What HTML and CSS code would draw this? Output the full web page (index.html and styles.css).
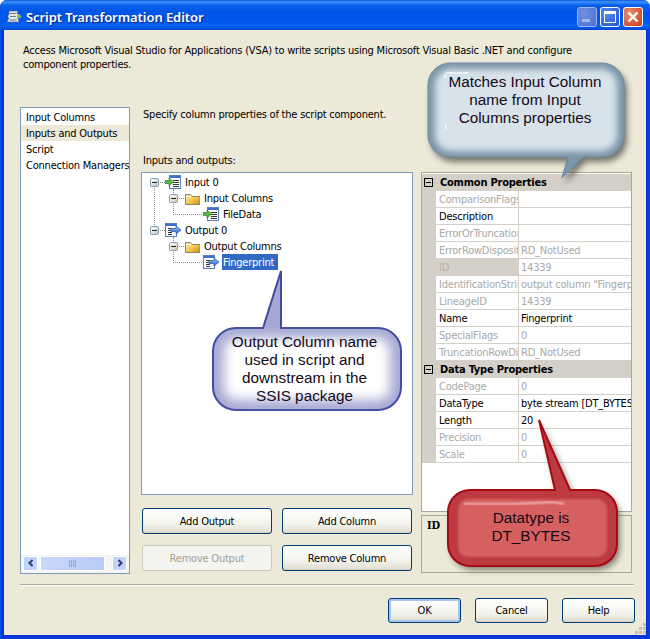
FILE: index.html
```html
<!DOCTYPE html>
<html lang="en">
<head>
<meta charset="utf-8">
<title>Script Transformation Editor</title>
<link rel="stylesheet" href="styles.css">
</head>
<body>
<svg class="defs" width="0" height="0" aria-hidden="true">
  <defs>
    <linearGradient id="folderFill" x1="0" y1="0" x2="1" y2="1"><stop offset="0" stop-color="#fff0b0"/><stop offset=".5" stop-color="#f8c850"/><stop offset="1" stop-color="#c88a18"/></linearGradient>
    <linearGradient id="expFill" x1="0" y1="0" x2="1" y2="1"><stop offset="0" stop-color="#fff"/><stop offset="1" stop-color="#c8c4b0"/></linearGradient>
    <linearGradient id="arrowBlue" x1="0" y1="0" x2="0" y2="1"><stop offset="0" stop-color="#9cc4f4"/><stop offset="1" stop-color="#2a66c8"/></linearGradient>
    <filter id="blur3" x="-20%" y="-20%" width="140%" height="140%"><feGaussianBlur stdDeviation="3"/></filter>
    <filter id="blur6" x="-20%" y="-20%" width="140%" height="140%"><feGaussianBlur stdDeviation="6"/></filter>
    <filter id="blur1" x="-20%" y="-40%" width="140%" height="180%"><feGaussianBlur stdDeviation="1"/></filter>
    <symbol id="expander" viewBox="0 0 9 9"><rect x=".5" y=".5" width="8" height="8" rx="1" fill="url(#expFill)" stroke="#7f9db9"/><path d="M2 4.500h5" stroke="#222" fill="none"/></symbol>
    <symbol id="doc" viewBox="0 0 16 14"><rect x="4.500" y=".5" width="11" height="13" fill="#fff" stroke="#5a7fc0"/><rect x="5" y="1" width="10" height="2" fill="#3c6fd0"/><path d="M8 5.500h6M8 7.500h6M8 9.500h6M8 11.500h6" stroke="#333" fill="none"/></symbol>
    <symbol id="inIcon" viewBox="0 0 16 14"><use href="#doc" width="16" height="14"/><path d="M0 5.500h4V3l4.500 4L4 11V8.500H0z" fill="#58b848" stroke="#2d7a28" stroke-width=".7"/></symbol>
    <symbol id="outIcon" viewBox="0 0 16 14"><rect x=".5" y=".5" width="11" height="13" fill="#fff" stroke="#5a7fc0"/><rect x="1" y="1" width="10" height="2" fill="#3c6fd0"/><path d="M3 5.500h4M3 7.500h4M3 9.500h4M3 11.500h4" stroke="#333" fill="none"/><path d="M6 5.500h5V3l5 4-5 4V8.500H6z" fill="url(#arrowBlue)" stroke="#1c4fa8" stroke-width=".7"/></symbol>
    <symbol id="folder" viewBox="0 0 15 12"><path d="M.5 11.500V1.500h5l1.500 2h8v8z" fill="url(#folderFill)" stroke="#8f8860"/><path d="M1 3.500h5" stroke="#fff" fill="none"/></symbol>
  </defs>
</svg>

<div class="window">
  <header class="titlebar">
    <svg class="app-icon" viewBox="0 0 16 16" width="16" height="16" aria-hidden="true">
      <path d="M3 2h9l-1 3h2v4h-1l1 4H1l2-4H2V6h1z" fill="#e4e6ea" stroke="#5b6a80" stroke-width=".6"/>
      <path d="M4 4.500h6M4 7.500h6M3.500 11h7" stroke="#6f7b8c" fill="none"/>
      <path d="M11 6.500h2V5l3 2.500L13 10V8.500h-2z" fill="#62c24e"/>
    </svg>
    <span class="title">Script Transformation Editor</span>
    <div class="caption-buttons">
      <span class="cap cap-min"><i class="min-bar"></i></span>
      <span class="cap cap-max"><i class="max-box"></i></span>
      <span class="cap cap-close">
        <svg viewBox="0 0 12 12" width="12" height="12" aria-hidden="true"><path d="M1.500 1.500l9 9M10.500 1.500l-9 9" stroke="#fff" stroke-width="2.400" fill="none"/></svg>
      </span>
    </div>
  </header>

  <div class="client">
    <p class="description">Access Microsoft Visual Studio for Applications (VSA) to write scripts using Microsoft Visual Basic .NET and configure<br>component properties.</p>

    <div class="main">
      <nav class="nav-list">
        <ul class="nav-items">
          <li>Input Columns</li>
          <li class="current">Inputs and Outputs</li>
          <li>Script</li>
          <li>Connection Managers</li>
        </ul>
        <div class="hscroll">
          <span class="sb-btn"><svg viewBox="0 0 8 8" width="8" height="8" aria-hidden="true"><path d="M5.500 1L2.500 4l3 3" stroke="#2b3f70" stroke-width="2" fill="none"/></svg></span>
          <span class="sb-thumb"><i></i><i></i><i></i><i></i></span>
          <span class="sb-btn"><svg viewBox="0 0 8 8" width="8" height="8" aria-hidden="true"><path d="M2.500 1l3 3-3 3" stroke="#2b3f70" stroke-width="2" fill="none"/></svg></span>
        </div>
      </nav>

      <section class="editor">
        <p class="specify">Specify column properties of the script component.</p>
        <p class="io-label">Inputs and outputs:</p>
        <div class="panes">
          <div class="mid">
            <div class="tree">
              <div class="tree-row">
                <svg class="g0" viewBox="0 0 39 16" aria-hidden="true"><path class="dots" d="M12.500 12v4M16 8.500h7M31.500 15v1"/><use href="#expander" x="8" y="4" width="9" height="9"/><use href="#inIcon" x="23" y="1" width="16" height="14"/></svg>
                <span class="tree-label">Input 0</span>
              </div>
              <div class="tree-row">
                <svg class="g1" viewBox="0 0 58 16" aria-hidden="true"><path class="dots" d="M12.500 0v16M31.500 0v4M35 8.500h7M31.500 12v4"/><use href="#expander" x="27" y="4" width="9" height="9"/><use href="#folder" x="43" y="3" width="15" height="12"/></svg>
                <span class="tree-label">Input Columns</span>
              </div>
              <div class="tree-row">
                <svg class="g2" viewBox="0 0 77 16" aria-hidden="true"><path class="dots" d="M12.500 0v16M31.500 0v8.500H61"/><use href="#inIcon" x="61" y="1" width="16" height="14"/></svg>
                <span class="tree-label">FileData</span>
              </div>
              <div class="tree-row">
                <svg class="g0" viewBox="0 0 39 16" aria-hidden="true"><path class="dots" d="M12.500 0v4M16 8.500h7M31.500 15v1"/><use href="#expander" x="8" y="4" width="9" height="9"/><use href="#outIcon" x="23" y="1" width="16" height="14"/></svg>
                <span class="tree-label">Output 0</span>
              </div>
              <div class="tree-row">
                <svg class="g1" viewBox="0 0 58 16" aria-hidden="true"><path class="dots" d="M31.500 0v4M35 8.500h7M31.500 12v4"/><use href="#expander" x="27" y="4" width="9" height="9"/><use href="#folder" x="43" y="3" width="15" height="12"/></svg>
                <span class="tree-label">Output Columns</span>
              </div>
              <div class="tree-row">
                <svg class="g2" viewBox="0 0 77 16" aria-hidden="true"><path class="dots" d="M31.500 0v8.500H61"/><use href="#outIcon" x="61" y="1" width="16" height="14"/></svg>
                <span class="tree-label selected">Fingerprint</span>
              </div>
            </div>
            <div class="tree-buttons">
              <button class="btn" type="button">Add Output</button>
              <button class="btn" type="button">Add Column</button>
              <button class="btn" type="button" disabled>Remove Output</button>
              <button class="btn" type="button">Remove Column</button>
            </div>
          </div>

          <div class="side">
            <div class="props">
              <div class="cat"><span class="cat-box"></span>Common Properties</div>
              <div class="row off"><span class="k">ComparisonFlags</span><span class="v"></span></div>
              <div class="row"><span class="k">Description</span><span class="v"></span></div>
              <div class="row off"><span class="k">ErrorOrTruncationOperation</span><span class="v"></span></div>
              <div class="row off"><span class="k">ErrorRowDisposition</span><span class="v">RD_NotUsed</span></div>
              <div class="row off idrow"><span class="k">ID</span><span class="v">14339</span></div>
              <div class="row off"><span class="k">IdentificationString</span><span class="v">output column "Fingerprint"</span></div>
              <div class="row off"><span class="k">LineageID</span><span class="v">14339</span></div>
              <div class="row"><span class="k">Name</span><span class="v">Fingerprint</span></div>
              <div class="row off"><span class="k">SpecialFlags</span><span class="v">0</span></div>
              <div class="row off"><span class="k">TruncationRowDisposition</span><span class="v">RD_NotUsed</span></div>
              <div class="cat"><span class="cat-box"></span>Data Type Properties</div>
              <div class="row off"><span class="k">CodePage</span><span class="v">0</span></div>
              <div class="row"><span class="k">DataType</span><span class="v">byte stream [DT_BYTES]</span></div>
              <div class="row"><span class="k">Length</span><span class="v">20</span></div>
              <div class="row off"><span class="k">Precision</span><span class="v">0</span></div>
              <div class="row off"><span class="k">Scale</span><span class="v">0</span></div>
            </div>
            <div class="help-pane"><strong>ID</strong></div>
          </div>
        </div>
      </section>
    </div>

    <div class="separator"></div>

    <footer class="footer">
      <button class="btn btn-foot btn-default" type="button">OK</button>
      <button class="btn btn-foot" type="button">Cancel</button>
      <button class="btn btn-foot" type="button">Help</button>
    </footer>
  </div>

  <div class="callout callout-steel">
    <svg viewBox="420 55 220 135" width="220" height="135" aria-hidden="true">
      <path d="M450 63h152a22 22 0 0 1 22 22v50a22 22 0 0 1-22 22h-19l-21 21 6-21h-118a22 22 0 0 1-22-22V85a22 22 0 0 1 22-22z" fill="#000" opacity=".5" filter="url(#blur3)" transform="translate(3 5)"/>
      <path d="M450 63h152a22 22 0 0 1 22 22v50a22 22 0 0 1-22 22h-19l-21 21 6-21h-118a22 22 0 0 1-22-22V85a22 22 0 0 1 22-22z" fill="#7c97a9" stroke="#6b8a9d"/>
      <rect x="435" y="69" width="182" height="82" rx="16" fill="#d7e2ea" filter="url(#blur3)"/>
      <path d="M446 73h22M445 74v4M446 125v4" stroke="#fff" stroke-width="1.500" fill="none" opacity=".85"/>
    </svg>
    <span class="callout-text">Matches Input Column<br>name from Input<br>Columns properties</span>
  </div>

  <div class="callout callout-indigo">
    <svg viewBox="205 265 205 155" width="205" height="155" aria-hidden="true">
      <path d="M236 328h27l18-57v57h97a23 23 0 0 1 23 23v36a23 23 0 0 1-23 23H236a23 23 0 0 1-23-23v-36a23 23 0 0 1 23-23z" fill="#a4a8d2" stroke="#3f4a9c" stroke-width="2"/>
      <rect x="224" y="338" width="166" height="62" rx="12" fill="#fff" filter="url(#blur6)"/>
    </svg>
    <span class="callout-text">Output Column name<br>used in script and<br>downstream in the<br>SSIS package</span>
  </div>

  <div class="callout callout-red">
    <svg viewBox="440 415 190 160" width="190" height="160" aria-hidden="true">
      <path d="M470 490h85l-16-70 31 70h25a22 22 0 0 1 22 22v32a22 22 0 0 1-22 22H470a22 22 0 0 1-22-22v-32a22 22 0 0 1 22-22z" fill="#000" opacity=".45" filter="url(#blur3)" transform="translate(3 4)"/>
      <path d="M470 490h85l-16-70 31 70h25a22 22 0 0 1 22 22v32a22 22 0 0 1-22 22H470a22 22 0 0 1-22-22v-32a22 22 0 0 1 22-22z" fill="#bd3a40" stroke="#a80a14" stroke-width="2"/>
      <rect x="458" y="499" width="149" height="58" rx="10" fill="#d65f5f" filter="url(#blur1)"/>
      <path d="M464 504h50l40-2 10 2" stroke="#f6d8d8" stroke-width="1.500" fill="none" filter="url(#blur1)"/>
    </svg>
    <span class="callout-text">Datatype is<br>DT_BYTES</span>
  </div>

  <svg class="grip" viewBox="0 0 11 11" width="11" height="11" aria-hidden="true">
    <path d="M8 0h3v3H8zM4 4h3v3H4zM8 4h3v3H8zM0 8h3v3H0zM4 8h3v3H4zM8 8h3v3H8z" fill="#c5c2b0"/>
  </svg>
</div>
</body>
</html>
```
FILE: styles.css
```css
* { box-sizing: border-box; }
html, body { margin: 0; padding: 0; background: #fff; }
body {
  font-family: "DejaVu Sans Condensed", "DejaVu Sans", sans-serif;
  font-stretch: condensed;
  font-size: 11px;
  line-height: 14px;
  letter-spacing: -0.22px;
  color: #000;
}
p, ul { margin: 0; padding: 0; }
.defs { position: absolute; }

.window {
  position: relative;
  width: 650px;
  height: 639px;
  display: flex;
  flex-direction: column;
  overflow: hidden;
  border-radius: 7px 7px 0 0;
  background: linear-gradient(90deg, #0a5ae6 0, #0836d8 2px, #0836d8 648px, #0a4ce0 650px);
}

.titlebar {
  flex: none;
  height: 30px;
  display: flex;
  align-items: center;
  padding: 3px 7px 0 6px;
  background: linear-gradient(#0a58d8 0, #3d95ff 2px, #0a5fe8 5px, #0055e8 12px, #0058ee 22px, #0a62f0 26px, #0048d0 30px);
}
.app-icon { flex: none; margin-right: 4px; }
.title {
  flex: 1;
  font-family: "Noto Sans", sans-serif;
  font-stretch: normal;
  font-size: 13px;
  font-weight: 600;
  letter-spacing: -0.07px;
  color: #fff;
  text-shadow: 1px 1px 1px #0f2a80;
}
.caption-buttons { display: flex; gap: 3px; }
.cap {
  width: 20px;
  height: 20px;
  border: 1px solid #fff;
  border-radius: 3px;
  display: flex;
  align-items: center;
  justify-content: center;
  background: radial-gradient(circle at 30% 30%, #5a8af0, #1f50d8);
}
.cap-min {
  border-color: #9db6f0;
  background: radial-gradient(circle at 30% 30%, #7090e0, #4a70d8);
  align-items: flex-end;
  padding-bottom: 4px;
}
.min-bar { display: block; width: 8px; height: 3px; background: #a5b8ea; margin-right: 2px; }
.max-box { display: block; width: 12px; height: 12px; border: 1px solid #fff; border-top-width: 3px; }
.cap-close { background: radial-gradient(circle at 30% 30%, #e8906c, #c83c18); }

.client {
  flex: 1;
  position: relative;
  margin: 0 4px 4px 4px;
  padding: 13px 12px 0 16px;
  background: #ece9d8;
  min-height: 0;
  display: flex;
  flex-direction: column;
}
.description { margin-left: 3px; height: 28px; padding-top: 1px; }

.main {
  display: flex;
  margin-top: 36px;
  height: 467px;
}
.nav-list {
  flex: none;
  width: 110px;
  height: 467px;
  border: 1px solid #7f9db9;
  background: #fff;
  display: flex;
  flex-direction: column;
  justify-content: space-between;
}
.nav-items { list-style: none; padding-top: 1px; overflow: hidden; }
.nav-items li { height: 16px; line-height: 18px; padding-left: 5px; white-space: nowrap; overflow: hidden; }
.nav-items .current { background: #ece9d8; }

.hscroll {
  height: 18px;
  display: flex;
  align-items: center;
  gap: 2px;
  padding: 0 2px 2px;
  background: #f4f4f0;
}
.sb-btn {
  width: 15px;
  height: 15px;
  flex: none;
  border: 1px solid #fff;
  border-radius: 2px;
  background: #c1d3fb;
  display: flex;
  align-items: center;
  justify-content: center;
}
.sb-thumb {
  flex: 1;
  height: 15px;
  margin-right: 5px;
  border-radius: 2px;
  border: 1px solid #fff;
  background: linear-gradient(90deg, #c8d8fa, #b8ccf8);
  display: flex;
  align-items: center;
  justify-content: center;
  gap: 1px;
}
.sb-thumb i { width: 1px; height: 7px; background: #8ea4d8; }

.editor { flex: none; margin-left: 11px; width: 491px; }
.specify { margin-left: 2px; height: 14px; padding-top: 1px; }
.io-label { margin: 32px 0 0 2px; height: 14px; padding-top: 1px; }
.panes { display: flex; gap: 8px; margin-top: 5px; }
.mid { flex: none; width: 272px; }
.side { flex: none; width: 211px; }

.tree {
  height: 323px;
  border: 1px solid #7f9db9;
  background: #fff;
  padding-top: 1px;
}
.tree-row { height: 16px; display: flex; align-items: center; }
.tree-row svg { height: 16px; flex: none; }
.g0 { width: 39px; }
.g1 { width: 58px; }
.g2 { width: 77px; }
.dots { fill: none; stroke: #8c8c8c; stroke-dasharray: 1 1; }
.tree-label { margin-left: 3px; height: 16px; line-height: 15px; padding: 1px 1px 0; }
.tree-row .g2 + .tree-label { margin-left: 3px; }
.tree-label.selected { padding-right: 4px; background: #316ac5; color: #fff; }

.tree-buttons {
  margin: 13px 0 0 1px;
  display: grid;
  grid-template-columns: 130px 130px;
  grid-auto-rows: 26px;
  column-gap: 10px;
  row-gap: 11px;
}
.btn {
  font: inherit;
  font-stretch: condensed;
  letter-spacing: -0.22px;
  color: #000;
  border: 1px solid #003c74;
  border-radius: 3px;
  padding: 1px 0 0;
  background: linear-gradient(#fff, #f4f4ee 60%, #e6e2d6 90%, #d6d0c5);
}
.btn:disabled {
  color: #a1a192;
  border-color: #c9c7ba;
  background: #f4f4f0;
}

.props {
  height: 340px;
  border: 1px solid #aca899;
  padding-top: 1px;
  background: #fff;
  overflow: hidden;
}
.cat {
  height: 17px;
  line-height: 17px;
  background: #d4d0c8;
  font-weight: bold;
  display: flex;
  align-items: center;
  padding-left: 2px;
}
.cat-box {
  width: 9px;
  height: 9px;
  border: 1px solid #000;
  margin-right: 7px;
  background: linear-gradient(#000, #000) center / 5px 1px no-repeat;
}
.row {
  height: 17px;
  display: flex;
  margin-left: 14px;
  border-bottom: 1px solid #d4d0c8;
  box-shadow: -14px 0 0 #d4d0c8;
  line-height: 16px;
}
.k {
  flex: none;
  width: 83px;
  padding: 1px 0 0 3px;
  border-right: 1px solid #d4d0c8;
  white-space: nowrap;
  overflow: hidden;
}
.v {
  flex: 1;
  padding: 1px 0 0 2px;
  white-space: nowrap;
  overflow: hidden;
}
.off { color: #a8a8a8; }
.idrow .k { background: #d4d0c8; color: #b4b0a8; }

.help-pane {
  height: 58px;
  margin-top: 3px;
  border: 1px solid #aca899;
  padding: 3px 5px;
  font-family: "DejaVu Serif", serif;
  font-stretch: condensed;
  font-size: 11px;
}

.separator {
  margin-top: 10px;
  height: 2px;
  border-top: 1px solid #aca899;
  border-bottom: 1px solid #fff;
}
.footer {
  display: flex;
  justify-content: flex-end;
  gap: 14px;
  margin-top: 12px;
  margin-right: -1px;
}
.btn-foot { width: 73px; height: 25px; }
.btn-default {
  box-shadow: inset 0 0 0 2px #a8c4ee;
}

.callout { position: absolute; }
.callout svg { display: block; overflow: visible; }
.callout-text {
  position: absolute;
  left: 0;
  right: 0;
  text-align: center;
  font-family: "Liberation Sans", sans-serif;
  font-stretch: normal;
  font-size: 15.3px;
  letter-spacing: 0;
  line-height: 18px;
  color: #140a18;
  white-space: nowrap;
}
.callout-steel { left: 420px; top: 55px; width: 220px; height: 135px; }
.callout-steel .callout-text { top: 18px; left: -5px; width: 220px; }
.callout-indigo { left: 205px; top: 265px; width: 205px; height: 155px; }
.callout-indigo .callout-text { top: 68px; left: -3px; right: 3px; }
.callout-red { left: 440px; top: 415px; width: 190px; height: 160px; }
.callout-red .callout-text { top: 94px; left: -4px; right: 4px; }

.grip { position: absolute; right: 4px; bottom: 5px; }
```
